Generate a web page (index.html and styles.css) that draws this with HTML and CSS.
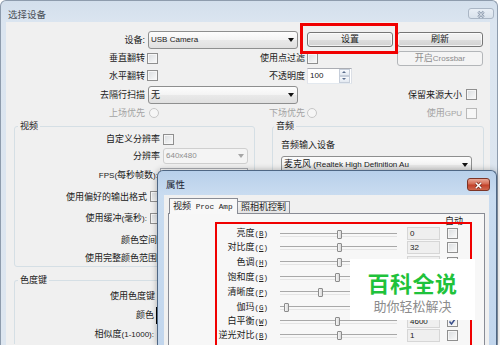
FILE: index.html
```html
<!DOCTYPE html>
<html lang="zh-CN">
<head>
  <meta charset="UTF-8">
  <meta name="viewport" content="width=device-width, initial-scale=1.0">
  <title>选择设备</title>
  <link rel="stylesheet" href="styles.css">
</head>
<body>

<!-- MAIN WINDOW: 选择设备 -->
<div class="window">
  <div class="window-title">
    <span class="caption">选择设备</span>
    <span class="close-btn inactive">
      <svg width="26" height="11" viewBox="0 0 26 11"><path d="M10 2.5 L16 8.5 M16 2.5 L10 8.5" stroke="#8f9db0" stroke-width="2.8" fill="none"/><path d="M10 2.5 L16 8.5 M16 2.5 L10 8.5" stroke="#eef2f7" stroke-width="1" fill="none"/></svg>
    </span>
  </div>

  <div class="window-body">
    <div class="top-grid">
      <span class="lab">设备:</span>
      <div class="combo span2"><span class="lt">USB Camera</span><i class="arrow"></i></div>
      <div class="btn setup">设置</div>
      <div class="btn refresh">刷新</div>

      <span class="lab">垂直翻转</span>
      <span class="chk ml1"></span>
      <span class="lab">使用点过滤</span>
      <span class="chk"></span>
      <div class="btn disabled">开启<span class="lt">Crossbar</span></div>

      <span class="lab">水平翻转</span>
      <span class="chk ml1"></span>
      <span class="lab pr4">不透明度</span>
      <div class="spin"><span class="spin-val">100</span><span class="spin-btns"><i class="up"></i><i class="dn"></i></span></div>

      <span class="lab">去隔行扫描</span>
      <div class="combo span2"><span>无</span><i class="arrow"></i></div>
      <div class="right-pair span-45"><span>保留来源大小</span><span class="chk"></span></div>

      <span class="lab off">上场优先</span>
      <span class="radio ml3"></span>
      <span class="lab off pr4">下场优先</span>
      <span class="radio"></span>
      <div class="right-pair off"><span>使用<span class="lt">GPU</span></span><span class="chk dis"></span></div>
    </div>

    <div class="groups">
      <div class="left-col">
        <fieldset class="group">
          <legend>视频</legend>
          <div class="vrow h14"><span class="vlab w145">自定义分辨率</span><span class="chk ml3"></span></div>
          <div class="vrow h20"><span class="vlab w145">分辨率</span><div class="combo dis res"><span class="lt">640x480</span><i class="arrow"></i></div></div>
          <div class="vrow h19"><span class="vlab w143"><span class="lt">FPS(</span>每秒帧数<span class="lt">):</span></span><span class="edit"></span></div>
          <div class="vrow h23"><span class="vlab w132">使用偏好的输出格式</span><span class="chk ml3"></span></div>
          <div class="vrow h20"><span class="vlab w132">使用缓冲<span class="lt">(</span>毫秒<span class="lt">):</span></span><span class="chk ml3"></span></div>
          <div class="vrow h23"><span class="vlab w142">颜色空间</span></div>
          <div class="vrow h14"><span class="vlab w142">使用完整颜色范围</span></div>
        </fieldset>

        <fieldset class="group open">
          <legend>色度键</legend>
          <div class="vrow h20"><span class="vlab w140">使用色度键</span></div>
          <div class="vrow h18"><span class="vlab w139">颜色</span><span class="swatch"></span></div>
          <div class="vrow h20"><span class="vlab w139">相似度<span class="lt">(1-1000):</span></span></div>
        </fieldset>
      </div>

      <fieldset class="group audio">
        <legend>音频</legend>
        <div class="audio-lab">音频输入设备</div>
        <div class="combo audio-combo"><span>麦克风<span class="lt"> (Realtek High Definition Au</span></span><i class="arrow"></i></div>
      </fieldset>
    </div>
  </div>
</div>

<!-- RED MARK ON 设置 -->
<div class="mark mark-setup"></div>

<!-- PROPERTIES DIALOG -->
<div class="dialog">
  <div class="dialog-title">
    <span class="caption">属性</span>
    <span class="close-btn red">
      <svg width="23" height="13" viewBox="0 0 23 13"><path d="M8.5 3.5 L14.5 9.5 M14.5 3.5 L8.5 9.5" stroke="#7a2a1c" stroke-width="3.2" fill="none"/><path d="M8.5 3.5 L14.5 9.5 M14.5 3.5 L8.5 9.5" stroke="#fff" stroke-width="1.6" fill="none"/></svg>
    </span>
  </div>
  <div class="dialog-body">
    <div class="tabs">
      <span class="tab on">视频<span class="mono"> Proc Amp</span></span>
      <span class="tab">照相机控制</span>
    </div>
    <div class="panel">
      <div class="auto-head">自动</div>

      <div class="srow h13">
        <span class="name">亮度<span class="key">(<u>B</u>)</span></span>
        <span class="slider"><i class="thumb" style="left:57px"></i></span>
        <span class="val">0</span><span class="chk"></span>
      </div>
      <div class="srow h14">
        <span class="name">对比度<span class="key">(<u>C</u>)</span></span>
        <span class="slider"><i class="thumb" style="left:57px"></i></span>
        <span class="val">32</span><span class="chk"></span>
      </div>
      <div class="srow h16">
        <span class="name">色调<span class="key">(<u>H</u>)</span></span>
        <span class="slider"><i class="thumb" style="left:57px"></i></span>
        <span class="val"></span><span class="chk"></span>
      </div>
      <div class="srow h14">
        <span class="name">饱和度<span class="key">(<u>S</u>)</span></span>
        <span class="slider"><i class="thumb" style="left:55px"></i></span>
        <span class="val"></span><span class="chk"></span>
      </div>
      <div class="srow h16">
        <span class="name">清晰度<span class="key">(<u>P</u>)</span></span>
        <span class="slider"><i class="thumb" style="left:38px"></i></span>
        <span class="val"></span><span class="chk"></span>
      </div>
      <div class="srow h14">
        <span class="name">伽玛<span class="key">(<u>G</u>)</span></span>
        <span class="slider"><i class="thumb" style="left:4px"></i></span>
        <span class="val"></span><span class="chk"></span>
      </div>
      <div class="srow h14">
        <span class="name">白平衡<span class="key">(<u>W</u>)</span></span>
        <span class="slider"><i class="thumb" style="left:55px"></i></span>
        <span class="val">4600</span>
        <span class="chk"><svg width="9" height="9" viewBox="0 0 9 9"><path d="M1.5 4.5 L3.5 7 L7.8 1" stroke="#3a4f8c" stroke-width="1.4" fill="none"/></svg></span>
      </div>
      <div class="srow h14">
        <span class="name">逆光对比<span class="key">(<u>B</u>)</span></span>
        <span class="slider"><i class="thumb" style="left:57px"></i></span>
        <span class="val">1</span><span class="chk"></span>
      </div>
    </div>
  </div>
</div>

<!-- RED MARK ON SLIDERS -->
<div class="mark mark-sliders"></div>

<!-- WATERMARK -->
<div class="watermark">
  <div class="wm-big">百科全说</div>
  <div class="wm-small">助你轻松解决</div>
</div>

</body>
</html>
```

FILE: styles.css
```css
* {
  margin: 0;
  padding: 0;
  box-sizing: border-box;
}
body {
  width: 500px;
  height: 345px;
  overflow: hidden;
  position: relative;
  background: #fff;
  font-family: "Liberation Sans", "Noto Sans CJK SC", sans-serif;
  font-size: 9px;
  line-height: 12px;
  color: #202020;
}
.lt {
  font-size: 8px;
}
.off {
  color: #a3a3a3;
}

/* main window */
.window {
  width: 498px;
  height: 345px;
  border: 1px solid #8e9cad;
  border-bottom: 0;
  border-radius: 6px 6px 0 0;
  background: linear-gradient(#d3dfec, #dbe5f0 22px, #dde6f0);
  padding: 0 7px 0 5px;
  display: flex;
  flex-direction: column;
}
.window-title {
  height: 21px;
  padding-top: 6px;
  display: flex;
  align-items: center;
}
.caption {
  margin-left: 2px;
  font-size: 9.5px;
  color: #4b5058;
}
.close-btn {
  margin-left: auto;
  align-self: flex-start;
  display: flex;
}
.close-btn.inactive {
  width: 26px;
  height: 11px;
  margin-top: 1px;
  margin-right: -4px;
  border: 1px solid #aab6c5;
  border-radius: 3px;
  background: linear-gradient(#e9eff6, #d9e2ec);
}
.window-body {
  flex: 1;
  min-height: 0;
  background: #f0f0f0;
}

/* top rows */
.top-grid {
  display: grid;
  grid-template-columns: 140px 90px 71px 90px 86px;
  grid-template-rows: 19px 18px 17px 21px 16px;
  padding-top: 8px;
  align-items: center;
  justify-items: start;
}
.top-grid .lab {
  grid-column: 1;
  justify-self: end;
  padding-right: 1px;
}
.top-grid .lab + .chk + .lab,
.top-grid .lab + .radio + .lab {
  grid-column: 3;
  padding-right: 2px;
}
.top-grid .lab.pr4 {
  padding-right: 4px;
}
.span2 {
  grid-column: 2 / 4;
  margin-left: 2px;
  width: 150px;
}
.span-45 {
  grid-column: 4 / 6;
}
.right-pair {
  justify-self: end;
  display: flex;
  align-items: center;
  gap: 4px;
  margin-right: 6px;
}
.ml1 { margin-left: 1px; }
.ml3 { margin-left: 3px; }

/* controls */
.btn {
  height: 15px;
  border: 1px solid #767676;
  border-radius: 3px;
  background: linear-gradient(#f3f3f3, #ececec 50%, #dedede 51%, #d2d2d2);
  box-shadow: inset 0 0 0 1px rgba(255, 255, 255, 0.7);
  text-align: center;
  line-height: 12px;
}
.btn.setup,
.btn.refresh {
  width: 86px;
}
.btn.disabled {
  width: 86px;
  border-color: #b3b6b9;
  background: #f4f4f4;
  box-shadow: none;
  color: #8c8c8c;
}
.combo {
  height: 18px;
  border: 1px solid #8e8f8f;
  border-radius: 3px;
  background: linear-gradient(#fdfdfd, #f3f3f3 50%, #e9e9e9 51%, #e0e0e0);
  display: flex;
  align-items: center;
  justify-content: space-between;
  padding: 0 3px 0 2px;
  white-space: nowrap;
}
.arrow {
  width: 0;
  height: 0;
  border-left: 3px solid transparent;
  border-right: 3px solid transparent;
  border-top: 4px solid #111;
}
.combo.dis {
  border-color: #cfcfcf;
  background: #f4f4f4;
  color: #8e8e8e;
}
.combo.dis .arrow {
  border-top-color: #a6a6a6;
}
.chk {
  width: 11px;
  height: 11px;
  border: 1px solid #8f8f8f;
  background: linear-gradient(135deg, #d9dcdf, #fbfbfb);
  box-shadow: inset 0 0 0 1px #f6f6f6;
  display: inline-flex;
  align-items: center;
  justify-content: center;
}
.chk.dis {
  border-color: #b9b9b9;
  background: #f7f7f7;
}
.radio {
  width: 10px;
  height: 10px;
  border: 1px solid #c6c6c6;
  border-radius: 50%;
  background: #f6f6f6;
}
.spin {
  width: 45px;
  height: 16px;
  background: #fff;
  border: 1px solid;
  border-color: #abadb3 #dbdfe6 #e3e9ef #e2e3ea;
  display: flex;
  justify-content: space-between;
}
.spin-val {
  padding-left: 2px;
  line-height: 13px;
  font-size: 8px;
}
.spin-btns {
  width: 11px;
  margin-right: 1px;
  display: flex;
  flex-direction: column;
}
.spin-btns i {
  flex: 1;
  position: relative;
  border: 1px solid #c6ceda;
  background: linear-gradient(#f7f9fc, #e3e9f1);
}
.spin-btns i::after {
  content: "";
  position: absolute;
  left: 2px;
  top: 1px;
  border-left: 2.5px solid transparent;
  border-right: 2.5px solid transparent;
}
.spin-btns .up::after {
  border-bottom: 2.5px solid #5a6d8c;
}
.spin-btns .dn::after {
  border-top: 2.5px solid #5a6d8c;
}
.edit {
  width: 88px;
  height: 16px;
  margin-left: 2px;
  background: #fff;
  border: 1px solid #abadb3;
}

/* group boxes */
.groups {
  display: flex;
  gap: 17px;
  padding-left: 8px;
  margin-top: -1px;
}
.left-col {
  width: 241px;
  display: flex;
  flex-direction: column;
  gap: 7px;
}
.group {
  min-width: 0;
  border: 1px solid #d5dfe5;
  border-radius: 3px;
  padding-bottom: 1px;
}
.group.open {
  border-bottom: 0;
  border-radius: 3px 3px 0 0;
  padding-bottom: 0;
}
.group legend {
  margin-left: 3px;
  padding: 0 2px;
  line-height: 12px;
}
.vrow {
  display: flex;
  align-items: center;
}
.vlab {
  text-align: right;
  white-space: nowrap;
}
.h13 { height: 13px; }
.h14 { height: 14px; }
.h16 { height: 16px; }
.h18 { height: 18px; }
.h19 { height: 19px; }
.h20 { height: 20px; }
.h23 { height: 23px; }
.w132 { width: 132px; }
.w139 { width: 139px; }
.w140 { width: 140px; }
.w142 { width: 142px; }
.w143 { width: 143px; }
.w145 { width: 145px; }
.res {
  width: 85px;
  height: 16px;
  margin-left: 3px;
}
.swatch {
  width: 30px;
  height: 17px;
  margin-left: 2px;
  background: #000;
}
.audio {
  width: 212px;
  height: 147px;
  align-self: flex-start;
}
.audio legend {
  margin-left: 1px;
}
.audio-lab {
  margin: 7px 0 0 8px;
}
.audio-combo {
  width: 191px;
  height: 17px;
  margin: 5px 0 0 8px;
}

/* red marks */
.mark {
  position: absolute;
  border: 2px solid #f00000;
}
.mark-setup {
  left: 300px;
  top: 23px;
  width: 98px;
  height: 31px;
  border-width: 3px;
}
.mark-sliders {
  left: 215px;
  top: 222px;
  width: 257px;
  height: 123px;
  border-bottom: 0;
}

/* properties dialog */
.dialog {
  position: absolute;
  left: 157px;
  top: 170px;
  width: 340px;
  height: 175px;
  border: 1px solid #4f6784;
  border-bottom: 0;
  border-radius: 6px 6px 0 0;
  background: linear-gradient(#b8d0ea, #c9dcf0 24px, #c2d6ed);
  box-shadow: 0 0 6px rgba(0, 0, 0, 0.3);
  padding: 0 7px 0 6px;
  display: flex;
  flex-direction: column;
}
.dialog-title {
  height: 24px;
  padding-top: 3px;
  display: flex;
  align-items: center;
}
.dialog-title .caption {
  color: #1c2633;
}
.close-btn.red {
  width: 23px;
  height: 13px;
  margin-top: 4px;
  margin-right: -1px;
  border: 1px solid #7d3426;
  border-radius: 3px;
  background: linear-gradient(#e9a898, #d46a52 45%, #c2412a 55%, #d0684e);
}
.dialog-body {
  flex: 1;
  min-height: 0;
  background: #f0f0f0;
  padding: 3px 4px 0 4px;
  display: flex;
  flex-direction: column;
}
.tabs {
  display: flex;
  align-items: flex-end;
  height: 15px;
  padding-left: 1px;
}
.tab {
  height: 12px;
  padding: 0 3px;
  border: 1px solid #898c95;
  border-bottom: 0;
  background: linear-gradient(#f4f4f4, #e4e4e4);
  line-height: 11px;
  white-space: nowrap;
}
.tab.on {
  width: 69px;
  height: 16px;
  margin-bottom: -1px;
  position: relative;
  background: #f8f8f8;
  line-height: 15px;
}
.tab + .tab {
  width: 52px;
  border-left: 0;
}
.mono {
  font-family: "Liberation Mono", monospace;
  font-size: 7.7px;
}
.panel {
  flex: 1;
  min-height: 0;
  overflow: hidden;
  border: 1px solid #898c95;
  border-bottom: 0;
  background: #f7f7f7;
  padding-top: 1px;
}
.auto-head {
  height: 12px;
  line-height: 12px;
  padding-left: 276px;
}
.srow {
  display: flex;
  align-items: center;
}
.srow .name {
  width: 99px;
  text-align: right;
  white-space: nowrap;
}
.key {
  font-family: "Liberation Mono", monospace;
  font-size: 7.5px;
}
.slider {
  width: 117px;
  height: 10px;
  margin-left: 12px;
  position: relative;
}
.slider::before {
  content: "";
  position: absolute;
  left: 0;
  right: 0;
  top: 4px;
  height: 2px;
  border-top: 1px solid #a8a8a8;
  border-bottom: 1px solid #e4e4e4;
}
.thumb {
  position: absolute;
  top: 1px;
  width: 5px;
  height: 9px;
  border: 1px solid #8c8c8c;
  border-radius: 1px;
  background: linear-gradient(90deg, #f6f6f6, #d9d9d9);
}
.val {
  width: 33px;
  height: 13px;
  margin-left: 10px;
  padding-left: 2px;
  border: 1px solid #d6d6d6;
  background: #efefef;
  font-size: 8px;
  line-height: 11px;
}
.srow .chk {
  margin-left: 7px;
}

/* watermark */
.watermark {
  position: absolute;
  left: 350px;
  top: 259px;
  width: 125px;
  height: 61px;
  background: #fff;
  text-align: center;
  padding-top: 11px;
}
.wm-big {
  font-family: "Noto Sans CJK SC", sans-serif;
  font-size: 22px;
  line-height: 24px;
  font-weight: 700;
  letter-spacing: 0.5px;
  color: #1fc23b;
}
.wm-small {
  margin-top: 4px;
  font-family: "Noto Sans CJK SC", sans-serif;
  font-size: 13px;
  line-height: 16px;
  color: #8c8c8c;
}
```
